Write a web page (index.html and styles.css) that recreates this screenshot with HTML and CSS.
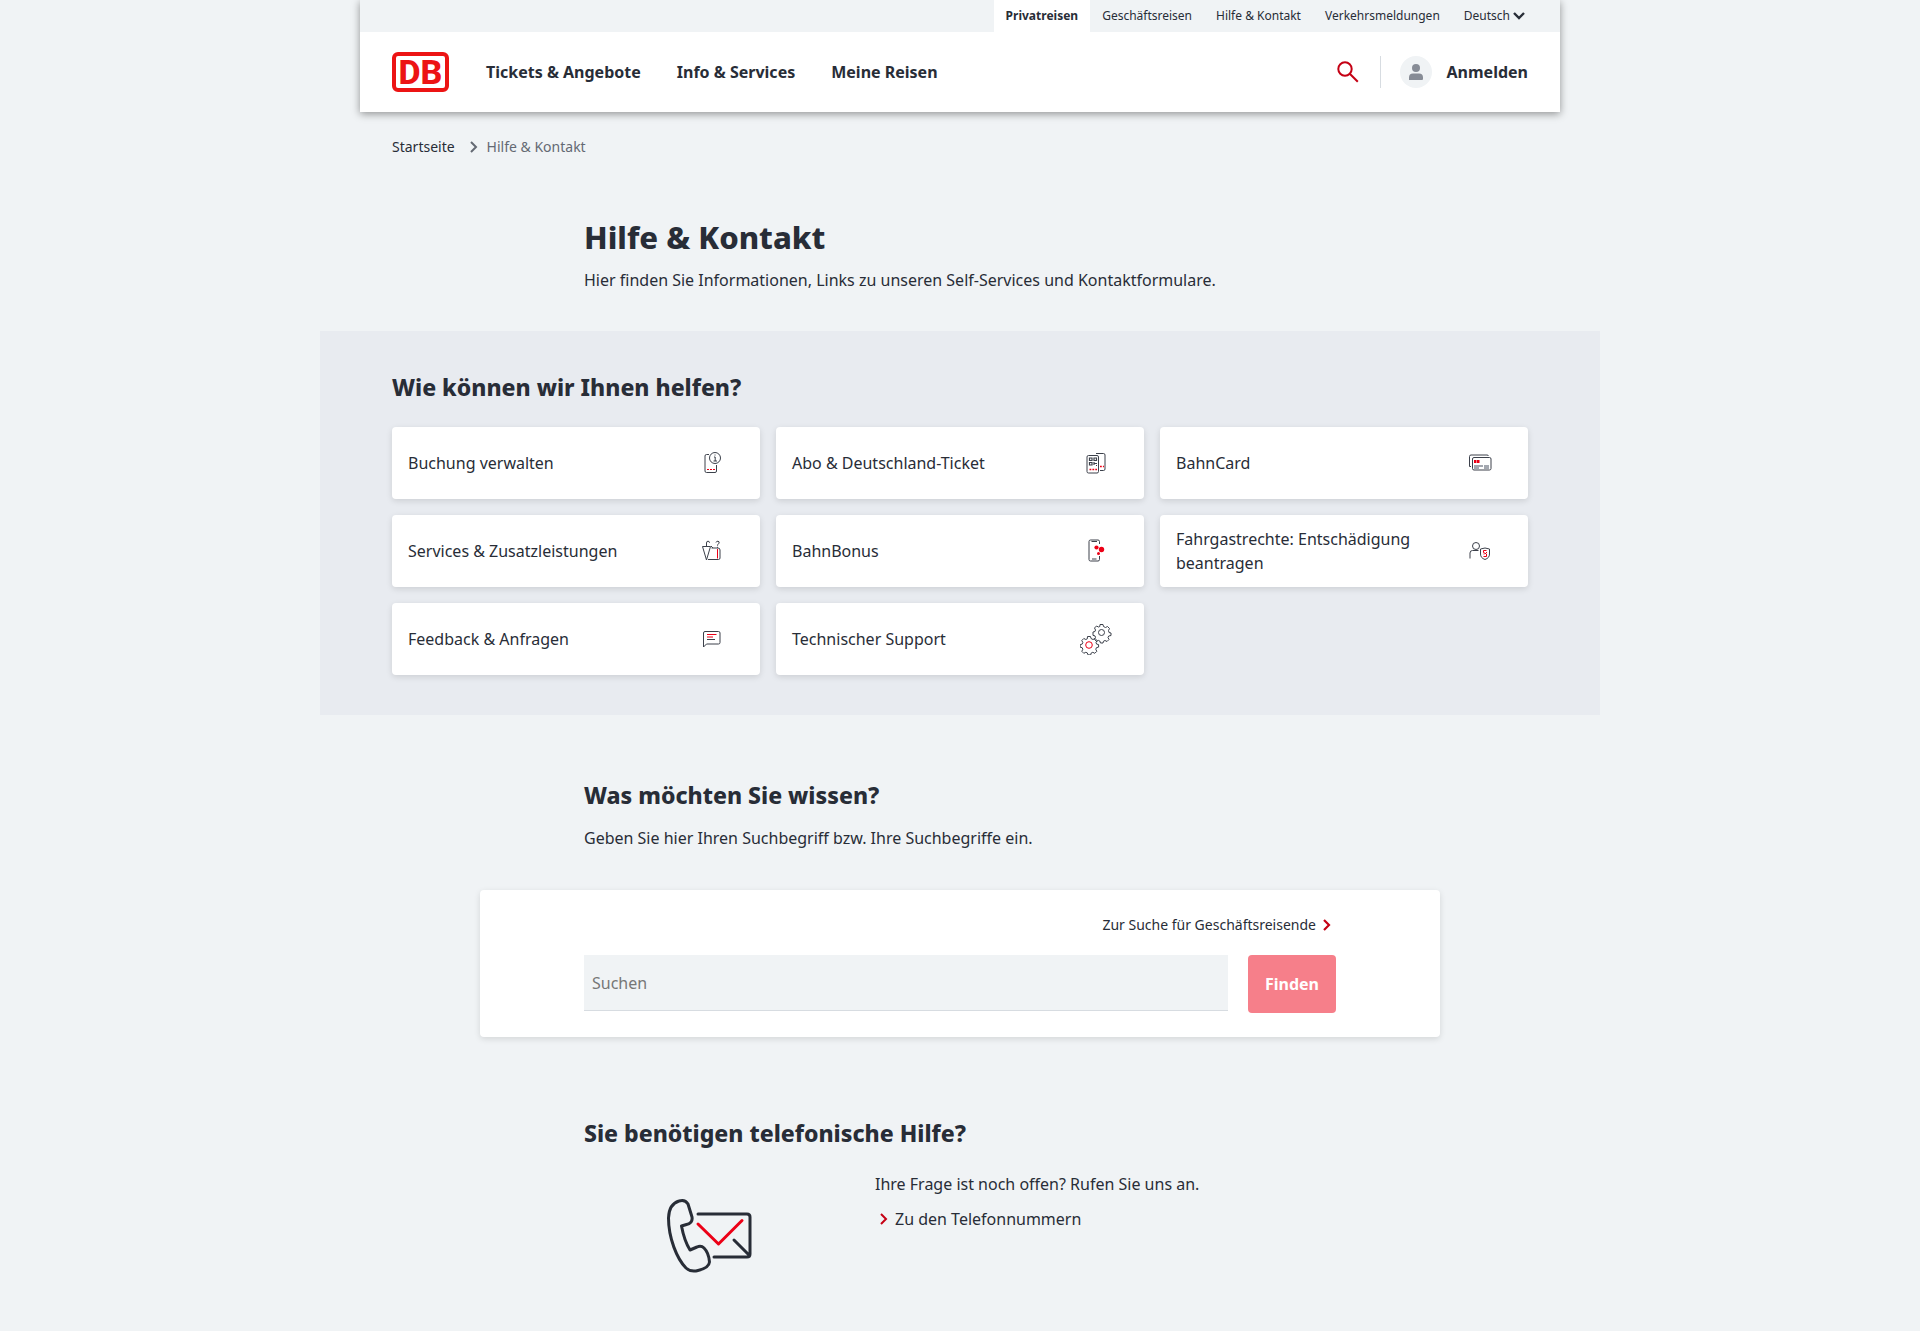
FILE: index.html
```html
<!DOCTYPE html>
<html lang="de">

<head>
    <meta charset="UTF-8">
    <meta name="viewport" content="width=device-width, initial-scale=1">
    <title>Hilfe &amp; Kontakt</title>
    <link rel="stylesheet" href="styles.css">
</head>

<body>

    <header class="header">
        <nav class="meta-nav">
            <a href="#" class="active">Privatreisen</a>
            <a href="#">Geschäftsreisen</a>
            <a href="#">Hilfe &amp; Kontakt</a>
            <a href="#">Verkehrsmeldungen</a>
            <button type="button" class="language">Deutsch
                <svg width="14" height="10" viewBox="0 0 14 10"><path d="M2 2l5 5 5-5" fill="none" stroke="#282d37" stroke-width="2.4"/></svg>
            </button>
        </nav>
        <div class="main-nav">
            <a href="#" class="logo">
                <svg width="57" height="40" viewBox="0 0 57 40">
                    <rect x="2" y="2" width="53" height="36" rx="4" fill="#fff" stroke="#ec1414" stroke-width="4"/>
                    <text x="28.5" y="32" text-anchor="middle" class="logo-text">DB</text>
                </svg>
            </a>
            <nav class="links">
                <a href="#">Tickets &amp; Angebote</a>
                <a href="#">Info &amp; Services</a>
                <a href="#">Meine Reisen</a>
            </nav>
            <button type="button" class="search-toggle" aria-label="Suche">
                <svg width="24" height="24" viewBox="0 0 24 24" fill="none" stroke="#c50014" stroke-width="2"><circle cx="9" cy="9" r="6.7"/><path d="M13.8 13.8l8 8"/></svg>
            </button>
            <a href="#" class="login">
                <span class="avatar">
                    <svg width="16" height="16" viewBox="0 0 16 16" fill="#878c96"><circle cx="8" cy="4" r="4"/><path d="M1 16v-2.500a4 4 0 0 1 4-4h6a4 4 0 0 1 4 4V15a1 1 0 0 1-1 1z"/></svg>
                </span>
                Anmelden
            </a>
        </div>
    </header>

    <main>
        <nav class="breadcrumb">
            <a href="#">Startseite</a>
            <svg width="10" height="14" viewBox="0 0 10 14"><path d="M2 2l5 5-5 5" fill="none" stroke="#646973" stroke-width="2"/></svg>
            <span>Hilfe &amp; Kontakt</span>
        </nav>

        <section class="intro">
            <h1>Hilfe &amp; Kontakt</h1>
            <p>Hier finden Sie Informationen, Links zu unseren Self-Services und Kontaktformulare.</p>
        </section>

        <section class="topics">
            <h2>Wie können wir Ihnen helfen?</h2>
            <div class="cards">
                <a href="#" class="card">
                    <span>Buchung verwalten</span>
                    <svg viewBox="0 0 32 32">
                        <path d="M13 7.500h-2.500a1.500 1.500 0 0 0-1.500 1.500v15a1.500 1.500 0 0 0 1.500 1.500h8.500a1.500 1.500 0 0 0 1.500-1.500v-6"/>
                        <circle cx="19" cy="11" r="5.500"/>
                        <path d="M18 10h1.200v4M17.500 14h3.500M19 7.500v1"/>
                        <path class="red" d="M11 22.500h8.500" stroke-dasharray="2 1"/>
                    </svg>
                </a>
                <a href="#" class="card">
                    <span>Abo &amp; Deutschland-Ticket</span>
                    <svg viewBox="0 0 32 32">
                        <path d="M16 6.500h7.500a1.500 1.500 0 0 1 1.500 1.500v14a1.500 1.500 0 0 1-1.500 1.500h-3.500"/>
                        <rect x="7" y="8.500" width="11.500" height="17.500" rx="1.500"/>
                        <path d="M9.500 11h2.500v2.500h-2.500zM14 11h2.500v2.500h-2.500zM9.500 15.500h2.500v2.500h-2.500zM14 15v3M14 16.500h3M16 18.500h1" stroke-width="1.200"/>
                        <path class="red" d="M9.500 22.500h7.500M20 19.500h4" stroke-dasharray="1.800 1.100" stroke-width="1.500"/>
                    </svg>
                </a>
                <a href="#" class="card">
                    <span>BahnCard</span>
                    <svg viewBox="0 0 32 32">
                        <path d="M7 19.500h-1.500v-10a1.500 1.500 0 0 1 1.500-1.500h16a1.500 1.500 0 0 1 1.500 1"/>
                        <rect x="8.500" y="10.500" width="18.500" height="12.500" rx="1.500"/>
                        <path class="red" d="M10 14.500h2.500M13 14.500h2.500" stroke-width="3"/>
                        <path d="M10 19h9M20 19h5M10 21h5M20 21h5" stroke="#878c96" stroke-width="1.600"/>
                    </svg>
                </a>
                <a href="#" class="card">
                    <span>Services &amp; Zusatzleistungen</span>
                    <svg viewBox="0 0 32 32">
                        <path d="M10.500 12V8q0-1.800 1.500-1.800t1.500 1.600M6.500 11.500h8L10.500 25z"/>
                        <path d="M12 24.500h10.500a1.500 1.500 0 0 0 1.500-1.500v-8a2 2 0 0 0-2-2h-6.500"/>
                        <path d="M15 11l2 2M20 7.500q.5-1.500 2-1.300 1.700.3 1 2-1.500 1.200-1.500 2.500M21.500 11.800v1"/>
                        <path class="red" d="M21.500 14v9.500"/>
                    </svg>
                </a>
                <a href="#" class="card">
                    <span>BahnBonus</span>
                    <svg viewBox="0 0 32 32">
                        <path d="M19.500 9V6.500a1.500 1.500 0 0 0-1.500-1.500h-7.500A1.500 1.500 0 0 0 9 6.500v18a1.500 1.500 0 0 0 1.500 1.500H18a1.500 1.500 0 0 0 1.500-1.500V21M11.500 6.500h5.500M12 24h4.500"/>
                        <g fill="#ec0016" stroke="none"><circle cx="16.500" cy="12.500" r="2.100"/><circle cx="21.500" cy="14.500" r="2.700"/><circle cx="18.500" cy="18.500" r="1.500"/></g>
                    </svg>
                </a>
                <a href="#" class="card">
                    <span>Fahrgastrechte: Entschädigung beantragen</span>
                    <svg viewBox="0 0 32 32">
                        <circle cx="12" cy="11" r="3.500"/>
                        <path d="M6 23.500V18a2.500 2.500 0 0 1 2.500-2.500h6"/>
                        <path d="M16.500 14l4.500-1 4.500 1v5q0 4-4.500 5.500-4.500-1.500-4.500-5.500z"/>
                        <path class="red" d="M22.500 15.500h-3v2l3 1.500v2.500h-3M20 18.500v1M22.500 17v1"/>
                    </svg>
                </a>
                <a href="#" class="card">
                    <span>Feedback &amp; Anfragen</span>
                    <svg viewBox="0 0 32 32">
                        <path d="M7.500 24V10a1.500 1.500 0 0 1 1.500-1.500h13.500a1.500 1.500 0 0 1 1.500 1.500v9.500a1.500 1.500 0 0 1-1.500 1.500h-12z"/>
                        <path class="red" d="M11 11.500h9.500"/>
                        <path class="red" d="M11 14h6"/>
                        <path d="M11 16.500h8"/>
                    </svg>
                </a>
                <a href="#" class="card">
                    <span>Technischer Support</span>
                    <svg viewBox="0 0 32 32">
                        <circle cx="21.500" cy="9.500" r="3"/>
                        <path d="M20 1.500h3l.500 2 2 1 2-1 2 2-1 2 .500 2 2 .500v2.500l-2.300.500-.700 1.500 1 2-2 2-2-1-1.500.700-.500 1.800h-2.500l-.700-2-1.300-.600-2 1-2-2 1-2-.500-1.500-2-.500V9l2-.500.500-1.500-1-2 2-2 2 1 1.300-.500z"/>
                        <circle class="red" cx="9" cy="22" r="3.300"/>
                        <path d="M7.500 13.500h3l.5 2 2 1 2-1 2 2-1 2 .6 1.600 2 .5v2.500l-2.200.6-.6 1.600 1 2-2 2-2-1-1.600.7-.5 1.900H8l-.7-2-1.500-.6-2 1-2-2 1-2-.6-1.600-2-.5v-2.600l2-.5.600-1.600-1-2 2-2 2 1 1.500-.7z"/>
                    </svg>
                </a>
            </div>
        </section>

        <section class="question">
            <h2>Was möchten Sie wissen?</h2>
            <p>Geben Sie hier Ihren Suchbegriff bzw. Ihre Suchbegriffe ein.</p>
        </section>

        <form class="search-box">
            <a href="#" class="business-link">Zur Suche für Geschäftsreisende
                <svg width="10" height="14" viewBox="0 0 10 14"><path d="M2 2l5 5-5 5" fill="none" stroke="#c50014" stroke-width="2.200"/></svg>
            </a>
            <div class="search-row">
                <input type="search" placeholder="Suchen" aria-label="Suchen">
                <button type="submit">Finden</button>
            </div>
        </form>

        <section class="phone">
            <h2>Sie benötigen telefonische Hilfe?</h2>
            <div class="phone-row">
                <svg class="phone-icon" viewBox="0 0 96 96" fill="none" stroke="#282d37" stroke-width="3" stroke-linecap="round" stroke-linejoin="round">
                    <path d="M17 13Q7 16 6.500 30C6.500 50 15 71 24 80q5 4.500 12 2.500 11-2.500 11.500-8.500C47 67 44 62 42 60q-3-3-7-1l-7 3C23 54 21 46 19.500 38l5-1.500Q31 35 30 29L26 16q-3-5-9-3z"/>
                    <path d="M36 26h49q3 0 3 3v37q0 3-3 3H52M72 52l15 15"/>
                    <path d="M36 36l20.500 20L80 32.500" stroke="#ec0016"/>
                </svg>
                <div>
                    <p>Ihre Frage ist noch offen? Rufen Sie uns an.</p>
                    <a href="#" class="phone-link">
                        <svg width="10" height="14" viewBox="0 0 10 14"><path d="M2 2l5 5-5 5" fill="none" stroke="#c50014" stroke-width="2"/></svg>
                        Zu den Telefonnummern
                    </a>
                </div>
            </div>
        </section>
    </main>

</body>

</html>
```

FILE: styles.css
```css
* {
    margin: 0;
    padding: 0;
    box-sizing: border-box;
}

body {
    font-family: "Noto Sans", "Open Sans", sans-serif;
    font-size: 16px;
    line-height: 24px;
    background: #f0f3f5;
    color: #282d37;
}

a {
    color: inherit;
    text-decoration: none;
}

button,
input {
    font: inherit;
    color: inherit;
    border: none;
    background: none;
}

button {
    cursor: pointer;
}

svg {
    display: block;
    flex-shrink: 0;
}

h1 {
    font-size: 31px;
    line-height: 40px;
    font-weight: 800;
}

h2 {
    font-size: 23px;
    line-height: 32px;
    font-weight: 800;
}

/* Header */
.header {
    max-width: 1200px;
    margin: 0 auto;
    background: #fff;
    box-shadow: 0 2px 8px rgba(0, 0, 0, 0.4);
}

.meta-nav {
    display: flex;
    justify-content: flex-end;
    height: 32px;
    padding-right: 22px;
    background: #f0f3f5;
    font-size: 12px;
    line-height: 32px;
}

.meta-nav a,
.language {
    padding: 0 12px;
}

.meta-nav .active {
    background: #fff;
    font-weight: 700;
}

.language {
    display: flex;
    align-items: center;
    gap: 2px;
}

.main-nav {
    display: flex;
    align-items: center;
    height: 80px;
    padding: 0 32px;
    font-weight: 700;
}

.logo svg {
    overflow: visible;
}

.logo-text {
    font-family: Roboto, "Liberation Sans", sans-serif;
    font-size: 34px;
    font-weight: 800;
    fill: #ec1414;
}

.links {
    display: flex;
    flex: 1;
    gap: 36px;
    margin-left: 37px;
}

.search-toggle {
    padding-right: 20px;
    border-right: 1px solid #d7dce1;
    height: 32px;
}

.login {
    display: flex;
    align-items: center;
    gap: 15px;
    margin-left: 19px;
}

.avatar {
    display: flex;
    align-items: center;
    justify-content: center;
    width: 32px;
    height: 32px;
    border-radius: 50%;
    background: #f0f3f5;
}

/* Breadcrumb */
.breadcrumb {
    display: flex;
    align-items: center;
    max-width: 1136px;
    margin: 23px auto 0;
    font-size: 14px;
}

.breadcrumb svg {
    margin: 0 8px 0 14px;
}

.breadcrumb span {
    color: #646973;
}

.intro,
.question,
.phone {
    max-width: 752px;
    margin: 0 auto;
}

.intro {
    margin-top: 58px;
}

.intro p {
    margin-top: 11px;
}

/* Topics */
.topics {
    max-width: 1280px;
    margin: 39px auto 0;
    padding: 40px 72px;
    background: #e8ebf0;
}

.cards {
    display: grid;
    grid-template-columns: repeat(3, 1fr);
    gap: 16px;
    margin-top: 24px;
}

.card {
    display: flex;
    align-items: center;
    justify-content: space-between;
    gap: 32px;
    min-height: 72px;
    padding: 0 32px 0 16px;
    border-radius: 4px;
    background: #fff;
    box-shadow: 0 2px 6px rgba(0, 0, 0, 0.12);
}

.card svg {
    width: 32px;
    height: 32px;
    fill: none;
    stroke: #3c414b;
}

.card .red {
    stroke: #ec0016;
}

/* Search */
.question {
    margin-top: 64px;
}

.question p {
    margin-top: 15px;
}

.search-box {
    max-width: 960px;
    margin: 40px auto 0;
    padding: 23px 104px 24px;
    border-radius: 4px;
    background: #fff;
    box-shadow: 0 2px 6px rgba(0, 0, 0, 0.12);
}

.business-link {
    display: flex;
    align-items: center;
    justify-content: flex-end;
    gap: 6px;
    padding-right: 4px;
    font-size: 14px;
}

.search-row {
    display: flex;
    align-items: flex-start;
    gap: 20px;
    margin-top: 18px;
}

.search-row input {
    flex: 1;
    height: 56px;
    padding: 0 8px;
    border-bottom: 1px solid #d7dce1;
    background: #f0f3f5;
}

.search-row input::placeholder {
    color: #777;
}

.search-row button {
    width: 88px;
    height: 58px;
    border-radius: 4px;
    background: #f67f8a;
    color: #fff;
    font-weight: 700;
}

/* Phone */
.phone {
    margin-top: 80px;
    padding-bottom: 40px;
}

.phone-row {
    display: grid;
    grid-template-columns: 252px 1fr;
    gap: 39px;
    margin-top: 23px;
}

.phone-icon {
    width: 96px;
    height: 96px;
    margin: 16px auto 0;
}

.phone-link {
    display: inline-flex;
    align-items: center;
    gap: 6px;
    margin-top: 11px;
    padding-left: 4px;
}
```
